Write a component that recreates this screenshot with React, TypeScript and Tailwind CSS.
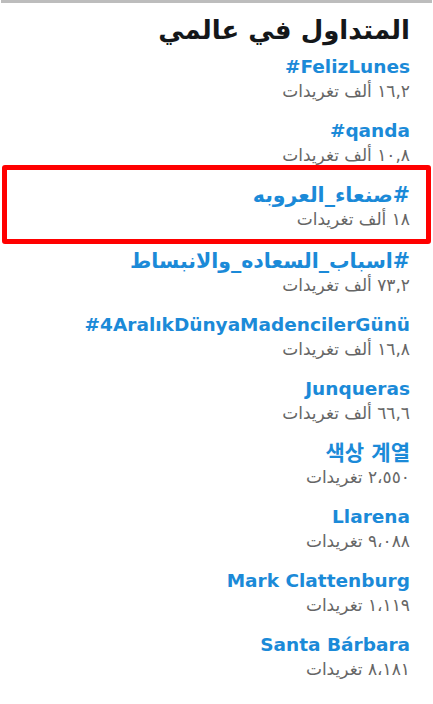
const trends = [
  { name: "#FelizLunes", count: "١٦,٢ ألف تغريدات" },
  { name: "#qanda", count: "١٠,٨ ألف تغريدات" },
  { name: "#صنعاء_العروبه", count: "١٨ ألف تغريدات", marked: true, size: "text-[20.5px]" },
  { name: "#اسباب_السعاده_والانبساط", count: "٧٣,٢ ألف تغريدات", size: "text-[20.5px]" },
  { name: "#4AralıkDünyaMadencilerGünü", count: "١٦,٨ ألف تغريدات" },
  { name: "Junqueras", count: "٦٦,٦ ألف تغريدات" },
  { name: "색상 계열", count: "٢،٥٥٠ تغريدات", size: "text-[21px]" },
  { name: "Llarena", count: "٩،٠٨٨ تغريدات" },
  { name: "Mark Clattenburg", count: "١،١١٩ تغريدات" },
  { name: "Santa Bárbara", count: "٨،١٨١ تغريدات" },
];

export default function App() {
  return (
    <div
      dir="rtl"
      className="w-[433px] h-[704px] bg-white overflow-hidden"
      style={{ fontFamily: '"DejaVu Sans", "Noto Sans CJK KR", sans-serif' }}
    >
      <div className="mx-[1px] h-[3px] bg-[#bdbdbd]" />
      <h2 className="pr-[23px] pt-[11px] pb-[1px] text-[26px] leading-[32px] font-bold text-[#14171a]">
        المتداول في عالمي
      </h2>

      <ul>
        {trends.map((t, i) => (
          <li
            key={i}
            className={
              "relative pr-[23px] py-[8px] " + (t.marked ? "h-[66px]" : "h-[64px]")
            }
          >
            {t.marked && (
              <div className="absolute -top-[10px] -bottom-[3px] left-[2px] right-[2px] border-[5px] border-[#ff0000] rounded-[3px]" />
            )}
            <div
              className={
                "leading-[24px] font-bold text-[#1b8ad8] whitespace-nowrap " +
                (t.size ?? "text-[18.5px]")
              }
            >
              <span dir="auto">{t.name}</span>
            </div>
            <div className="text-[17px] leading-[24px] text-[#666]">{t.count}</div>
          </li>
        ))}
      </ul>
    </div>
  );
}
